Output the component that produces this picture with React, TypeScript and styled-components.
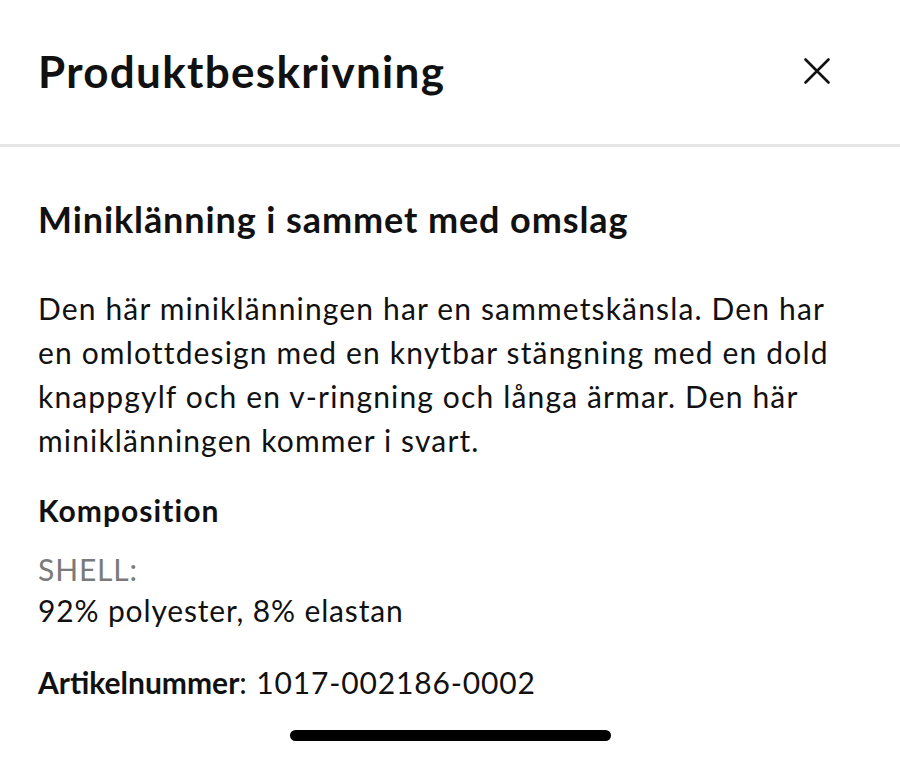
import React from "react";
import styled, { createGlobalStyle } from "styled-components";

const Global = createGlobalStyle`
  html, body { margin: 0; padding: 0; background: #fff; }
  body { font-family: Lato, "Noto Sans", sans-serif; color: #111; -webkit-font-smoothing: antialiased; }
`;

const Page = styled.div`
  width: 900px;
  height: 759px;
  display: flex;
  flex-direction: column;
  background: #fff;
  overflow: hidden;
`;

const Header = styled.header`
  height: 147px;
  box-sizing: border-box;
  padding: 0 63px 2px 38px;
  display: flex;
  align-items: center;
  justify-content: space-between;
  border-bottom: 3px solid #e6e6e6;
`;

const Title = styled.h1`
  margin: 0;
  font-size: 44px;
  font-weight: 700;
  letter-spacing: 1.3px;
`;

const CloseButton = styled.button`
  border: 0;
  background: none;
  padding: 0;
  width: 40px;
  height: 40px;
  display: flex;
  align-items: center;
  justify-content: center;
  cursor: pointer;
`;

const Body = styled.main`
  flex: 1;
  padding: 48px 38px 0;
  display: flex;
  flex-direction: column;
`;

const Subtitle = styled.h2`
  margin: 0;
  font-size: 36px;
  font-weight: 700;
  line-height: 48px;
  letter-spacing: 0.9px;
`;

const Paragraph = styled.p`
  margin: 43px 0 0;
  font-size: 30px;
  line-height: 44px;
  font-weight: 400;
  letter-spacing: 1.15px;
`;

const SectionLabel = styled.h3`
  margin: 26px 0 0;
  font-size: 30px;
  font-weight: 700;
  line-height: 44px;
  letter-spacing: 1.05px;
`;

const Line = styled.div<{ $muted?: boolean; $gap?: number }>`
  font-size: 30px;
  line-height: 41px;
  letter-spacing: 0.85px;
  margin-top: ${(p) => p.$gap ?? 0}px;
  color: ${(p) => (p.$muted ? "#7a7a7a" : "#111")};
`;

const Strong = styled.strong`
  font-weight: 700;
  letter-spacing: 0;
`;

const HomeBar = styled.div`
  width: 321px;
  height: 11px;
  border-radius: 6px;
  background: #000;
  margin: 0 auto 18px;
`;

export default function App() {
  return (
    <>
      <Global />
      <Page>
        <Header>
          <Title>Produktbeskrivning</Title>
          <CloseButton aria-label="Stäng">
            <svg width="28" height="28" viewBox="0 0 28 28">
              <path d="M2.5 2.5 L25.5 25.5 M25.5 2.5 L2.5 25.5" stroke="#111" strokeWidth="2.6" strokeLinecap="round" />
            </svg>
          </CloseButton>
        </Header>
        <Body>
          <Subtitle>Miniklänning i sammet med omslag</Subtitle>
          <Paragraph>
            Den här miniklänningen har en sammetskänsla. Den har
            <br />
            en omlottdesign med en knytbar stängning med en dold
            <br />
            knappgylf och en v-ringning och långa ärmar. Den här
            <br />
            miniklänningen kommer i svart.
          </Paragraph>
          <SectionLabel>Komposition</SectionLabel>
          <Line $muted $gap={17}>SHELL:</Line>
          <Line>92% polyester, 8% elastan</Line>
          <Line $gap={31}>
            <Strong>Artikelnummer</Strong>: 1017-002186-0002
          </Line>
        </Body>
        <HomeBar />
      </Page>
    </>
  );
}
